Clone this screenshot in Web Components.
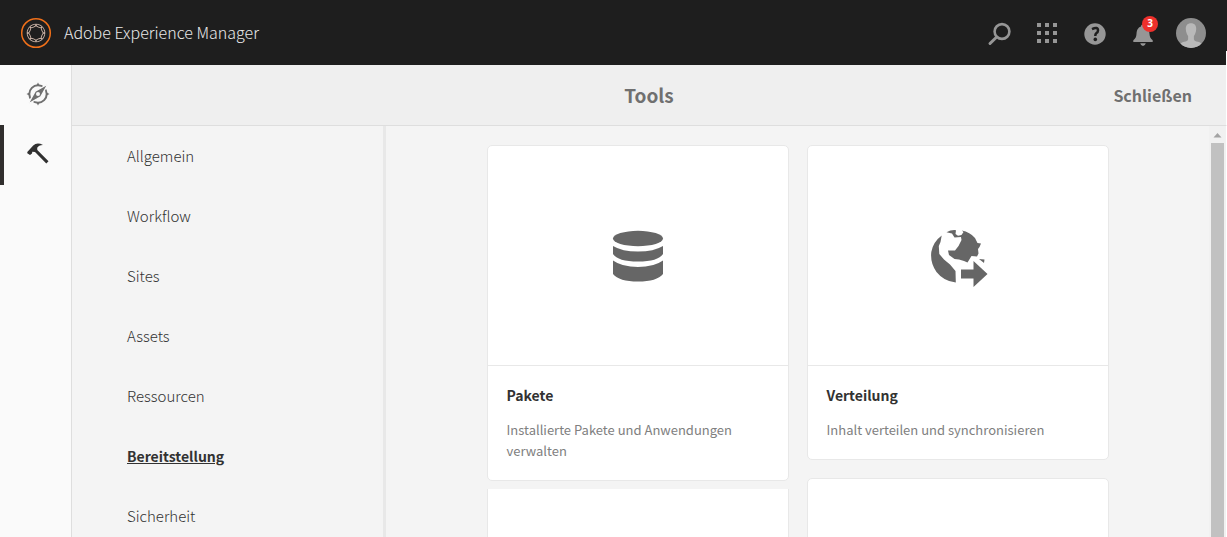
<!DOCTYPE html>
<html lang="de">
<head>
<meta charset="utf-8">
<meta name="viewport" content="width=device-width, initial-scale=1">
<title>Adobe Experience Manager</title>
<style>
html, body { height: 100%; margin: 0; }
body { font-family: "Noto Sans CJK SC", "Open Sans", sans-serif; font-size: 14px; color: #4b4b4b; background: #f4f4f4; overflow: hidden; }
</style>
</head>
<body>
<aem-shell></aem-shell>
<script>
const define = (name, html) => {
  const template = document.createElement("template");
  template.innerHTML = html;
  customElements.define(name, class extends HTMLElement {
    constructor() {
      super();
      this.attachShadow({ mode: "open" }).append(template.content.cloneNode(true));
    }
  });
};

define("aem-header", `
<style>
:host { display: flex; align-items: center; justify-content: space-between; height: 65px; flex: none; box-sizing: border-box; padding: 0 20px; background: #1e1e1e; position: relative; }
:host::after { content: ""; position: absolute; right: 0; bottom: 0; width: 1px; height: 14px; background: #fff; }
a { display: flex; align-items: center; gap: 12px; color: #eaeaea; text-decoration: none; font-size: 16px; line-height: 24px; font-weight: 300; }
a span { padding-bottom: 2px; }
svg { display: block; }
nav { display: flex; align-items: center; gap: 24px; }
button { border: 0; padding: 2px 0 0; margin: 0; background: none; color: #969696; display: block; position: relative; font: inherit; }
.badge { position: absolute; left: 11px; top: -4px; width: 16px; height: 16px; border-radius: 50%; background: #ee302c; color: #fff; font: bold 10px/14px "Open Sans", sans-serif; text-align: center; }
.last { margin-left: -4px; padding: 0; }
</style>
<a href="#">
  <svg width="32" height="32" viewBox="0 0 32 32" fill="none" aria-hidden="true">
    <circle cx="16" cy="16" r="14.3" stroke="#f0701a" stroke-width="1.5"/>
    <g stroke="#cdb5a8" stroke-width=".9">
      <g id="links"><ellipse cx="16" cy="8.4" rx="3.4" ry="1.2" transform="rotate(22.5 16 16)"/><ellipse cx="16" cy="8.4" rx="3.4" ry="1.2" transform="rotate(67.5 16 16)"/><ellipse cx="16" cy="8.4" rx="3.4" ry="1.2" transform="rotate(112.5 16 16)"/><ellipse cx="16" cy="8.4" rx="3.4" ry="1.2" transform="rotate(157.5 16 16)"/></g>
      <use href="#links" transform="rotate(180 16 16)"/>
    </g>
  </svg>
  <span>Adobe Experience Manager</span>
</a>
<nav aria-label="Werkzeuge">
  <button aria-label="Suchen"><svg width="24" height="24" viewBox="0 0 24 24" fill="none" stroke="currentColor"><circle cx="15" cy="9.5" r="7.4" stroke-width="2.6"/><path d="M9.7 15L3 21.500" stroke-width="3" stroke-linecap="round"/></svg></button>
  <button aria-label="Lösungen"><svg width="24" height="24" viewBox="0 0 24 24" fill="currentColor"><path d="M2 1h4v4H2zM10 1h4v4h-4zM18 1h4v4h-4zM2 9h4v4H2zM10 9h4v4h-4zM18 9h4v4h-4zM2 17h4v4H2zM10 17h4v4h-4zM18 17h4v4h-4z"/></svg></button>
  <button aria-label="Hilfe"><svg width="24" height="24" viewBox="0 0 24 24"><circle cx="12" cy="12" r="10.7" fill="currentColor"/><path d="M9 7.1Q15 4.3 15 8.5Q15 10.2 13.3 11.2Q12.2 12 12.3 14" fill="none" stroke="#1e1e1e" stroke-width="2.5"/><circle cx="12.3" cy="17.4" r="1.8" fill="#1e1e1e"/></svg></button>
  <button aria-label="Benachrichtigungen"><svg width="24" height="24" viewBox="0 0 24 24" fill="currentColor"><path d="M12 2.5c1.3 0 2 .8 2 2 3.200 1 4.300 4 4.500 7.500.2 3 1.200 4.800 3.200 6.300V20H2.300v-1.700c2-1.500 3-3.300 3.200-6.300C5.700 8.500 6.800 5.500 10 4.500c0-1.200.7-2 2-2zM9.200 21.200h5.600Q14 24 12 24Q10 24 9.200 21.200z"/></svg><span class="badge">3</span></button>
  <button class="last" aria-label="Benutzer"><svg width="32" height="32" viewBox="0 0 32 32"><defs><clipPath id="c"><circle cx="16" cy="16" r="15"/></clipPath></defs><circle cx="16" cy="16" r="15" fill="#8e8e8e"/><path clip-path="url(#c)" fill="#b9b9b9" d="M16 6.300c3.500 0 5.300 2.300 5.200 5.700-.1 3-1.200 5.500-2.300 7v3.200c0 1.500 2 2 4 2.600 2.600.8 3.600 1.500 4.300 3.200V32H4.800v-4c.7-1.700 1.700-2.400 4.300-3.200 2-.6 4-1.100 4-2.600V19c-1.100-1.500-2.200-4-2.300-7-.1-3.400 1.700-5.700 5.200-5.700z"/></svg></button>
</nav>`);

define("aem-rail", `
<style>
:host { display: flex; flex-direction: column; flex: none; width: 71px; background: #fafafa; border-right: 1px solid #dedede; }
button { height: 60px; width: 100%; border: 0; border-left: 4px solid transparent; padding: 0 0 2px; display: flex; align-items: center; justify-content: center; background: none; color: #707070; }
button[aria-pressed="true"] { border-left-color: #302e2d; color: #303030; padding-bottom: 4px; }
</style>
<button aria-label="Navigation" aria-pressed="false"><svg width="24" height="24" viewBox="0 0 24 24"><circle cx="12" cy="12" r="8.700" fill="none" stroke="currentColor" stroke-width="2"/><path d="M12 .5l1.500 2.800h-3zM12 23.500l-1.500-2.800h3zM.5 12l2.800-1.500v3zM23.500 12l-2.800 1.500v-3z" fill="currentColor"/><path d="M22 2L14.800 14.800L2 22L9.200 9.200z" fill="currentColor" stroke="#fafafa" stroke-width="1.400"/><circle cx="12" cy="12" r="2" fill="#fafafa"/></svg></button>
<button aria-label="Tools" aria-pressed="true"><svg width="24" height="24" viewBox="0 0 24 24" fill="currentColor"><path d="M1.300 11L7.200 4.500Q11 1 17 4Q12.500 4.200 11.200 6.800L11.300 9L22.500 20.300L20.300 22.400L9 11L6.300 10.800L6 12.500L4 14L1.300 12.300z"/></svg></button>`);

define("aem-titlebar", `
<style>
:host { display: grid; grid-template-columns: 1fr auto 1fr; align-items: center; height: 60px; flex: none; box-sizing: content-box; padding: 0 34px; background: #efefef; border-bottom: 1px solid #dedede; border-right: 1px solid #fff; color: #707070; }
h1 { grid-column: 2; margin: 0; font-size: 19px; line-height: 28px; font-weight: bold; }
button { justify-self: end; border: 0; padding: 0; background: none; color: inherit; font: bold 16px/24px "Noto Sans CJK SC", "Open Sans", sans-serif; }
</style>
<h1>Tools</h1><button>Schließen</button>`);

define("aem-menu", `
<style>
:host { display: block; flex: none; width: 311px; border-right: 3px solid #e8e8e8; overflow: hidden; }
::slotted(a) { display: block; padding: 18px 0 18px 55px; line-height: 24px; font-size: 15px; font-weight: 300; color: #323232; text-decoration: none; }
::slotted(a[aria-current]) { font-size: 14px; font-weight: bold; text-decoration: underline; }
</style>
<nav aria-label="Tools"><slot></slot></nav>`);

define("aem-card", `
<style>
:host { display: block; box-sizing: border-box; flex: none; background: #fff; border: 1px solid #e8e8e8; border-radius: 5px; }
.art { height: 219px; display: flex; align-items: center; justify-content: center; border-bottom: 1px solid #e8e8e8; color: #666; }
.text { padding: 17px 19px 19px; display: flex; flex-direction: column; gap: 12px; }
::slotted(h2) { margin: 0; font-size: 14px; line-height: 24px; color: #323232; }
::slotted(p) { margin: 0; font-size: 13px; line-height: 21px; color: #808080; }
:host([empty]) { height: 334px; }
:host([empty]) .art, :host([empty]) .text { display: none; }
:host([open-top]) { border-top: 0; border-radius: 0 0 5px 5px; }
</style>
<div class="art"><slot name="icon"></slot></div>
<div class="text"><slot></slot></div>`);

define("aem-scrollbar", `
<style>
:host { display: flex; flex-direction: column; align-items: center; flex: none; width: 17px; background: #f1f1f1; border-right: 1px solid #fff; }
svg { flex: none; display: block; }
div { flex: 1; width: 13px; background: #c1c1c1; }
</style>
<svg width="17" height="17" viewBox="0 0 17 17" aria-hidden="true"><path d="M4.500 11.500h8L8.500 7z" fill="#a3a3a3"/></svg><div></div>`);

define("aem-shell", `
<style>
:host { display: flex; flex-direction: column; height: 100vh; }
.row, .main, .body { display: flex; flex: 1; min-height: 0; min-width: 0; }
.main { flex-direction: column; }
.cards { flex: 1; min-width: 0; overflow: hidden; display: grid; grid-template-columns: 302px 302px; justify-content: center; column-gap: 18px; padding-top: 19px; }
.column { display: flex; flex-direction: column; gap: 18px; }
.column:first-child { gap: 8px; }
svg { display: block; }
</style>
<aem-header></aem-header>
<div class="row">
  <aem-rail></aem-rail>
  <div class="main">
    <aem-titlebar></aem-titlebar>
    <div class="body">
      <aem-menu>
        <a href="#">Allgemein</a><a href="#">Workflow</a><a href="#">Sites</a><a href="#">Assets</a><a href="#">Ressourcen</a><a href="#" aria-current="page">Bereitstellung</a><a href="#">Sicherheit</a>
      </aem-menu>
      <div class="cards">
        <div class="column">
          <aem-card>
            <svg slot="icon" width="60" height="60" viewBox="0 0 60 60" fill="#666" aria-hidden="true"><ellipse cx="30" cy="12.500" rx="25" ry="7.700"/><path d="M5 20Q14 25.500 30 25.500Q46 25.500 55 20V28Q50 35.500 30 35.500Q10 35.500 5 28zM5 34.500Q14 41 30 41Q46 41 55 34.500V48Q49 55.500 30 55.500Q11 55.500 5 48z"/></svg>
            <h2>Pakete</h2><p>Installierte Pakete und Anwendungen verwalten</p>
          </aem-card>
          <aem-card empty open-top></aem-card>
        </div>
        <div class="column">
          <aem-card>
            <svg slot="icon" width="60" height="60" viewBox="-1 0 60 60" fill="#666" overflow="visible" aria-hidden="true"><path d="M12.700 9.500L11.500 16L9.800 20L10.300 28L15 33.500L21 38.500L26.500 45L26.800 56.500Q15 55.500 7.500 46Q1 37 2.300 26Q4 16 12.700 9.500zM17.500 6.300Q22 3.700 27 4.200L26.500 8L29 9.800L32.500 9L34.500 6L32.800 4.500Q41 6 46 12L48.500 17L52 17.500L50.500 21L49 23L49.500 27.500L48 30.500L42.500 30L38.500 36.500L35 35L30 33.500L25.500 33L20 29L19 24.500L26 24.500L29.500 20L32.500 14L32 11L25.500 11.500L23 7.500zM50 33L55.500 33.500L55 37z"/><path d="M32 43.500H44.500V35L58.500 48L44.500 61V52.500H32z"/></svg>
            <h2>Verteilung</h2><p>Inhalt verteilen und synchronisieren</p>
          </aem-card>
          <aem-card empty></aem-card>
        </div>
      </div>
      <aem-scrollbar></aem-scrollbar>
    </div>
  </div>
</div>`);
</script>
</body>
</html>
